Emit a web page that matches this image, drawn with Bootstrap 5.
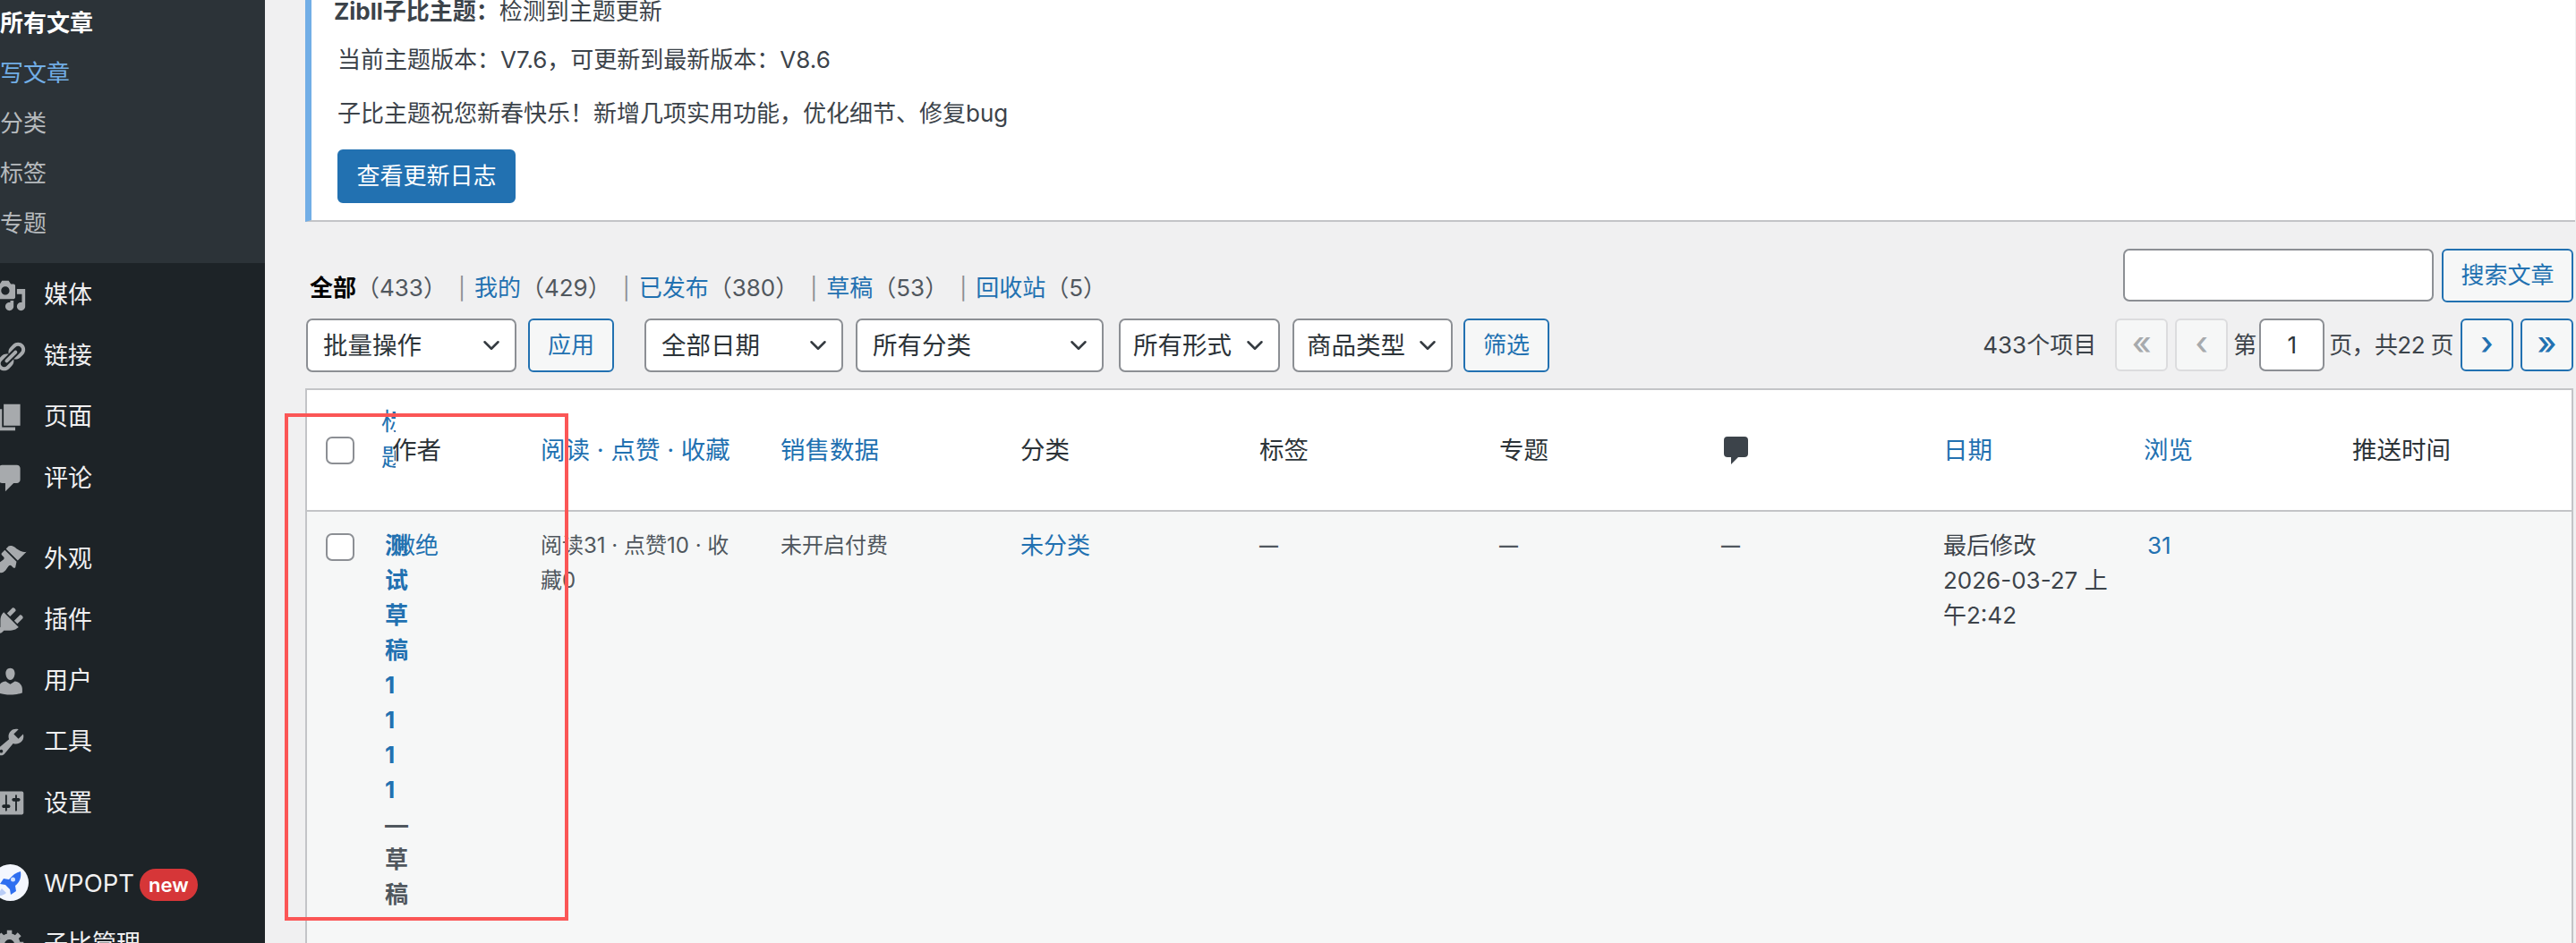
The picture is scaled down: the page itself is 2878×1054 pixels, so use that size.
<!doctype html>
<html lang="zh-CN">
<head>
<meta charset="utf-8">
<title>文章</title>
<link href="https://cdn.jsdelivr.net/npm/bootstrap@5.3.0/dist/css/bootstrap.min.css" rel="stylesheet">
<style>
html,body{height:100%;overflow:hidden}
body{font-family:Inter,"Noto Sans CJK SC",sans-serif;font-size:26px;line-height:40px;color:#3c434a;background:#f0f0f1}
a{color:#2271b1;text-decoration:none}
.wp-shell{height:1054px}
.wp-side{width:296px;flex:none;background:#1d2327;color:#f0f0f1;overflow:hidden}
.wp-sub{background:#2c3338;height:296px;margin:0;padding:0;list-style:none}
.wp-sub li{height:56px;line-height:56px;color:#b6babd;white-space:nowrap}
.wp-sub li:first-child{margin-top:-2px;color:#fff;font-weight:600;display:block}
.wp-sub li.cur{color:#72aee6}
.wp-menu{margin:0;padding:2px 0 0;list-style:none;font-size:27px}
.wp-menu li{height:68.2px;display:flex;align-items:center;white-space:nowrap}
.wp-menu li.gap{margin-top:22px}
.wp-menu li.gap2{margin-top:21px}
.wp-ic{width:37px;height:37px;flex:none;margin-left:-7px;margin-right:19px;fill:#a7aaad}
.wp-rocket{width:41px;height:41px;flex:none;margin-left:-9px;margin-right:17px}
.wp-new{background:#d63638;color:#fff;font-weight:600;font-size:22px;line-height:36px;height:36px;padding:0 10px;border-radius:18px;margin-left:6px;margin-top:4px}
.wp-brand{font-size:27.5px}
.wp-main{flex:1;min-width:0;padding-left:45px;padding-right:3px}
.wp-notice{background:#fff;border-left:7px solid #72aee6;border-bottom:2px solid #c3c4c7;margin-right:-2px;padding:0 0 19px 29px;height:248px}
.wp-notice p{margin:0;line-height:40px}
.wp-notice .l1{transform:translateY(-7px);margin-left:-4px;margin-bottom:-7px}
.wp-notice .l2{margin-top:14px}
.wp-notice .l3{margin-top:20px}
.wp-btn-main{display:block;margin-top:20px;width:199px;height:60px;line-height:56px;background:#2271b1;color:#fff;border:2px solid #2271b1;border-radius:6px;font-size:26px;padding:0}
.wp-status{margin-top:24px;margin-left:5px;white-space:pre}
.wp-status b{color:#000;font-weight:700}
.wp-status i{font-style:normal;color:#50575e}
.wp-sep{color:#8c8f94;font-size:24px;padding:0 10px 0 13px}
.wp-search-row{margin-top:30px;height:59px}
.wp-input{height:59px;border:2px solid #8c8f94;border-radius:7px;background:#fff}
.wp-search-in{width:347px;margin-right:9px}
.wp-line{background:#f6f7f7;color:#2271b1;border:2px solid #2271b1;border-radius:6px;height:60px;font-size:26px;line-height:56px;padding:0;text-align:center;flex:none}
.wp-line:hover{background:#f6f7f7;color:#2271b1;border-color:#2271b1}
.wp-tools{margin-top:19px;height:60px}
.wp-sel{flex:none;height:60px;font-size:27.5px;line-height:36px;border:2px solid #8c8f94;border-radius:7px;color:#2c3338;padding:0 40px 0 17px;background-size:26px 20px;background-position:right 13px center}
.wp-sel.tight{padding-left:14px}
.wp-pg{flex:none;width:59px;height:59px;border:2px solid #2271b1;border-radius:6px;background:#f6f7f7;color:#2271b1;font-size:36px;line-height:50px;padding:0;text-align:center;font-weight:500}
.wp-pg.off{border-color:#dcdcde;color:#a7aaad;background:#f6f7f7}
.wp-cur{width:73px;height:59px;text-align:center;font-size:26px;margin:0 5px 0 3px;color:#2c3338;border:2px solid #8c8f94;border-radius:7px;background:#fff;line-height:55px}
.wp-of{margin-right:8px;letter-spacing:-.6px}
.wp-count{margin-right:21px}
.wp-prev{margin-right:6px}
.wp-table-wrap{margin-top:18px;border:solid #c3c4c7;border-width:2px 2px 0}
.wp-table{table-layout:fixed;width:2530px;margin:0;border-collapse:separate;border-spacing:0;color:#3c434a}
.wp-table th,.wp-table td{padding:0 15px;border:0;box-shadow:none;font-weight:400;font-size:26px;color:#3c434a}
.wp-table thead th{background:#fff;height:136px;vertical-align:middle;line-height:40px;border-bottom:2px solid #c3c4c7;white-space:nowrap;padding-bottom:0;color:#2c3338;font-size:27.5px}
.wp-table tbody td{background:#f6f7f7;vertical-align:top;padding-top:18px;line-height:39px;height:560px}
.wp-table .wp-sm{font-size:24px;line-height:39px;color:#50575e}
.wp-table tbody td.wp-dash{font-size:21px;font-weight:600;color:#50575e}
.wp-table tbody td.wp-read{padding-right:40px}
.wp-table tbody td.wp-views{padding-left:19px}
.form-check-input.wp-cb[type=checkbox]{width:32px;height:31px;margin:0;border:2px solid #8c8f94;border-radius:7px;display:block;background-color:#fff;margin-left:6px}
.wp-table tbody td.wp-cbc{padding-top:24px;padding-left:15px}
.wp-table thead th.wp-tt{vertical-align:top;padding:16px 0 0 15px;white-space:normal;line-height:40px;font-size:27px}
.wp-tt span{display:block;width:16px;overflow:hidden;word-break:break-all}
.wp-tt a{display:block}
.wp-table tbody td.wp-tc{padding:18px 0 0 19px;overflow:visible;word-break:break-all;font-weight:700;white-space:normal}
.wp-tc div{width:0;color:#50575e}
.wp-tc a{color:#2271b1}
.wp-mark{position:absolute;left:318px;top:462px;width:317px;height:567px;border:4px solid #fb5656;pointer-events:none}
.wp-cbub{width:27px;height:31px;display:block;fill:#3c434a;margin-left:3px}
.w-sel1{width:235px;margin-left:1px}
.w-apply{width:96px;margin-left:13px}
.w-sel2{width:222px;margin-left:34px}
.w-sel3{width:277px;margin-left:14px}
.w-sel4{width:180px;margin-left:17px}
.w-sel5{width:179px;margin-left:14px}
.w-filter{width:96px;margin-left:12px}
.w-search{width:147px}
</style>
</head>
<body>
<div class="wp-shell d-flex">
  <nav class="wp-side">
    <ul class="wp-sub">
      <li>所有文章</li>
      <li class="cur">写文章</li>
      <li>分类</li>
      <li>标签</li>
      <li>专题</li>
    </ul>
    <ul class="wp-menu">
      <li><svg class="wp-ic" viewBox="0 0 20 20"><path d="M13 11V4c0-.55-.45-1-1-1h-1.67L9 1H5L3.67 3H2c-.55 0-1 .45-1 1v7c0 .55.45 1 1 1h10c.55 0 1-.45 1-1zM7 4.5c1.38 0 2.5 1.12 2.5 2.5S8.38 9.5 7 9.5 4.5 8.38 4.5 7 5.62 4.5 7 4.5zM14 6h5v10.5c0 1.38-1.12 2.5-2.5 2.5S14 17.88 14 16.5s1.12-2.5 2.5-2.5c.17 0 .34.02.5.05V9h-3V6zm-4 8.05V13h2v3.5c0 1.38-1.12 2.5-2.5 2.5S7 17.88 7 16.5 8.12 14 9.5 14c.17 0 .34.02.5.05z"/></svg>媒体</li>
      <li><svg class="wp-ic" viewBox="0 0 20 20"><path d="M17.74 2.76c1.68 1.69 1.68 4.41 0 6.1l-1.53 1.52c-1.12 1.12-2.7 1.47-4.14 1.09l2.62-2.61.76-.77.76-.76c.84-.84.84-2.2 0-3.04-.84-.85-2.2-.85-3.04 0l-.77.76-3.38 3.38c-.37-1.44-.02-3.02 1.1-4.14l1.52-1.53c1.69-1.68 4.42-1.68 6.1 0zM8.59 13.43l5.34-5.34c.42-.42.42-1.1 0-1.52-.44-.43-1.13-.39-1.53 0l-5.33 5.34c-.42.42-.42 1.1 0 1.52.44.43 1.13.39 1.52 0zm-.76 2.29l4.14-4.15c.38 1.44.03 3.02-1.09 4.14l-1.52 1.53c-1.69 1.68-4.41 1.68-6.1 0-1.68-1.68-1.68-4.42 0-6.1l1.53-1.52c1.12-1.12 2.7-1.47 4.14-1.1l-4.14 4.15c-.85.84-.85 2.2 0 3.05.84.84 2.2.84 3.04 0z"/></svg>链接</li>
      <li><svg class="wp-ic" viewBox="0 0 20 20"><path d="M6 15V2h10v13H6zm-1 1h8v2H3V5h2v11z"/></svg>页面</li>
      <li><svg class="wp-ic" viewBox="0 0 20 20"><path d="M5 2h9c1.1 0 2 .9 2 2v7c0 1.1-.9 2-2 2h-2l-5 5v-5H5c-1.1 0-2-.9-2-2V4c0-1.1.9-2 2-2z"/></svg>评论</li>
      <li class="gap"><svg class="wp-ic" viewBox="0 0 20 20"><path d="M14.48 11.06L7.41 3.99l1.5-1.5c.5-.56 2.3-.47 3.51.32 1.21.8 1.43 1.28 2.91 2.1 1.18.64 2.45 1.26 4.45.85zm-.71.71L6.7 4.7 4.93 6.47c-.39.39-.39 1.02 0 1.41l1.06 1.06c.39.39.39 1.03 0 1.42-.6.6-1.43 1.11-2.21 1.69-.35.26-.7.53-1.01.84-1.34 1.34-1.34 3.51 0 4.85 1.1 1.1 2.7 1 3.9-.3.33-.32.6-.68.84-1.02.56-.78 1.08-1.61 1.68-2.21.39-.39 1.02-.39 1.41 0l1.06 1.06c.39.39 1.02.39 1.41 0z"/></svg>外观</li>
      <li><svg class="wp-ic" viewBox="0 0 20 20"><path d="M13.11 4.36L9.87 7.6 8 5.73l3.24-3.24c.35-.34 1.05-.2 1.56.32.52.51.66 1.21.31 1.55zm-8 1.77l.91-1.12 9.01 9.01-1.19.84c-.71.71-2.63 1.16-3.82 1.16H6.14L4.9 17.26c-.59.59-1.54.59-2.12 0-.59-.58-.59-1.53 0-2.12l1.24-1.24v-3.88c0-1.13.4-3.19 1.09-3.89zm7.26 3.97l3.24-3.24c.34-.35 1.04-.21 1.55.31.52.51.66 1.21.31 1.55l-3.24 3.25z"/></svg>插件</li>
      <li><svg class="wp-ic" viewBox="0 0 20 20"><path d="M10 9.25c-2.27 0-2.73-3.44-2.73-3.44C7 4.02 7.82 2 9.97 2c2.16 0 2.98 2.02 2.71 3.81 0 0-.41 3.44-2.68 3.44zm0 2.57L12.72 10c2.39 0 4.52 2.33 4.52 4.53v2.49s-3.65 1.13-7.24 1.13c-3.65 0-7.24-1.13-7.24-1.13v-2.49c0-2.25 1.94-4.48 4.47-4.48z"/></svg>用户</li>
      <li><svg class="wp-ic" viewBox="0 0 20 20"><path d="M16.68 9.77c-1.34 1.34-3.3 1.67-4.95.99l-5.41 6.52c-.99.99-2.59.99-3.58 0s-.99-2.59 0-3.57l6.52-5.42c-.68-1.65-.35-3.61.99-4.95 1.28-1.28 3.12-1.62 4.72-1.06l-2.89 2.89 2.82 2.82 2.86-2.87c.53 1.58.18 3.39-1.08 4.65zM3.81 16.21c.4.39 1.04.39 1.43 0 .4-.4.4-1.04 0-1.43-.39-.4-1.03-.4-1.43 0-.39.39-.39 1.03 0 1.43z"/></svg>工具</li>
      <li><svg class="wp-ic" viewBox="0 0 20 20"><path fill-rule="evenodd" d="M18 16V4c0-.55-.45-1-1-1H3c-.55 0-1 .45-1 1v12c0 .55.45 1 1 1h14c.55 0 1-.45 1-1zM8 11h1c.55 0 1 .45 1 1s-.45 1-1 1H8v1.5c0 .28-.22.5-.5.5s-.5-.22-.5-.5V13H6c-.55 0-1-.45-1-1s.45-1 1-1h1V5.5c0-.28.22-.5.5-.5s.5.22.5.5V11zm5-2h-1c-.55 0-1-.45-1-1s.45-1 1-1h1V5.5c0-.28.22-.5.5-.5s.5.22.5.5V7h1c.55 0 1 .45 1 1s-.45 1-1 1h-1v5.5c0 .28-.22.5-.5.5s-.5-.22-.5-.5V9z"/></svg>设置</li>
      <li class="gap2"><svg class="wp-rocket" viewBox="0 0 41 41"><circle cx="20.5" cy="20.5" r="20.5" fill="#f4f7fe"/><path d="M32 8c1 7-1 12-6 16l1 6-6 4-1-6-5-5-6-1 4-6 6 1c4-5 8-8 13-9z" fill="#2f6ff0"/><circle cx="23.5" cy="17" r="2.5" fill="#cfe0ff"/><path d="M11 27c-2 2-3 5-3 8 3 0 6-1 8-3z" fill="#b9cdf7"/></svg><span class="wp-brand">WPOPT</span><span class="wp-new">new</span></li>
      <li><svg class="wp-ic" viewBox="0 0 20 20"><path d="M18 12h-2.18c-.17.7-.44 1.35-.81 1.93l1.54 1.54-2.1 2.1-1.54-1.54c-.58.36-1.23.63-1.91.79V19H8v-2.18c-.68-.16-1.33-.43-1.91-.79l-1.54 1.54-2.12-2.12 1.54-1.54c-.36-.58-.63-1.23-.79-1.91H1V9.03h2.17c.16-.7.44-1.35.8-1.94L2.43 5.55l2.1-2.1 1.54 1.54c.58-.37 1.24-.64 1.93-.81V2h3v2.18c.68.16 1.33.43 1.91.79l1.54-1.54 2.12 2.12-1.54 1.54c.36.59.64 1.24.8 1.94H18V12zm-8.5 1.5c1.66 0 3-1.34 3-3s-1.34-3-3-3-3 1.34-3 3 1.34 3 3 3z"/></svg>子比管理</li>
    </ul>
  </nav>
  <main class="wp-main">
    <div class="wp-notice">
      <p class="l1"><strong>Zibll子比主题：</strong>检测到主题更新</p>
      <p class="l2">当前主题版本：V7.6，可更新到最新版本：V8.6</p>
      <p class="l3">子比主题祝您新春快乐！新增几项实用功能，优化细节、修复bug</p>
      <button class="btn wp-btn-main" type="button">查看更新日志</button>
    </div>
    <div class="wp-search-row d-flex justify-content-between align-items-start">
      <div class="wp-status"><b>全部</b><i>（433）</i><span class="wp-sep">|</span><a href="#">我的</a><i>（429）</i><span class="wp-sep">|</span><a href="#">已发布</a><i>（380）</i><span class="wp-sep">|</span><a href="#">草稿</a><i>（53）</i><span class="wp-sep">|</span><a href="#">回收站</a><i>（5）</i></div>
      <div class="d-flex">
        <input class="wp-input wp-search-in" type="text" aria-label="搜索">
        <button class="btn wp-line w-search" type="button">搜索文章</button>
      </div>
    </div>
    <div class="wp-tools d-flex align-items-start">
      <select class="form-select wp-sel w-sel1"><option>批量操作</option></select>
      <button class="btn wp-line w-apply" type="button">应用</button>
      <select class="form-select wp-sel w-sel2"><option>全部日期</option></select>
      <select class="form-select wp-sel w-sel3"><option>所有分类</option></select>
      <select class="form-select wp-sel tight w-sel4"><option>所有形式</option></select>
      <select class="form-select wp-sel tight w-sel5"><option>商品类型</option></select>
      <button class="btn wp-line w-filter" type="button">筛选</button>
      <div class="d-flex align-items-center ms-auto text-nowrap">
        <span class="wp-count">433个项目</span>
        <span class="wp-pg off me-2">«</span>
        <span class="wp-pg off wp-prev">‹</span>
        <span>第</span>
        <span class="wp-cur">1</span>
        <span class="wp-of">页，共22 页</span>
        <a class="wp-pg me-2" href="#">›</a>
        <a class="wp-pg" href="#">»</a>
      </div>
    </div>
    <div class="wp-table-wrap">
      <table class="table wp-table">
        <colgroup>
          <col style="width:68px"><col style="width:12px"><col style="width:166px"><col style="width:268px"><col style="width:268px"><col style="width:267px"><col style="width:268px"><col style="width:248px"><col style="width:248px"><col style="width:224px"><col style="width:233px"><col style="width:260px">
        </colgroup>
        <thead>
          <tr>
            <th><input class="form-check-input wp-cb" type="checkbox" aria-label="全选"></th>
            <th class="wp-tt"><span><a href="#">标题</a></span></th>
            <th>作者</th>
            <th><a href="#">阅读 · 点赞 · 收藏</a></th>
            <th><a href="#">销售数据</a></th>
            <th>分类</th>
            <th>标签</th>
            <th>专题</th>
            <th><svg class="wp-cbub" viewBox="0 0 27 31"><path d="M4 0h19a4 4 0 0 1 4 4v15a4 4 0 0 1-4 4h-7l-8 8v-8H4a4 4 0 0 1-4-4V4a4 4 0 0 1 4-4z"/></svg></th>
            <th><a href="#">日期</a></th>
            <th><a href="#">浏览</a></th>
            <th>推送时间</th>
          </tr>
        </thead>
        <tbody>
          <tr>
            <td class="wp-cbc"><input class="form-check-input wp-cb" type="checkbox" aria-label="选择"></td>
            <td class="wp-tc"><div><a href="#">测试草稿1111</a> — 草稿</div></td>
            <td class="text-nowrap"><a href="#">微绝</a></td>
            <td class="wp-sm wp-read">阅读31 · 点赞10 · 收藏0</td>
            <td class="wp-sm">未开启付费</td>
            <td><a href="#">未分类</a></td>
            <td class="wp-dash">—</td>
            <td class="wp-dash">—</td>
            <td class="wp-dash">—</td>
            <td>最后修改<br>2026-03-27 上午2:42</td>
            <td class="wp-views"><a href="#">31</a></td>
            <td></td>
          </tr>
        </tbody>
      </table>
    </div>
  </main>
</div>
<div class="wp-mark"></div>
<script src="https://cdn.jsdelivr.net/npm/bootstrap@5.3.0/dist/js/bootstrap.bundle.min.js"></script>
</body>
</html>
